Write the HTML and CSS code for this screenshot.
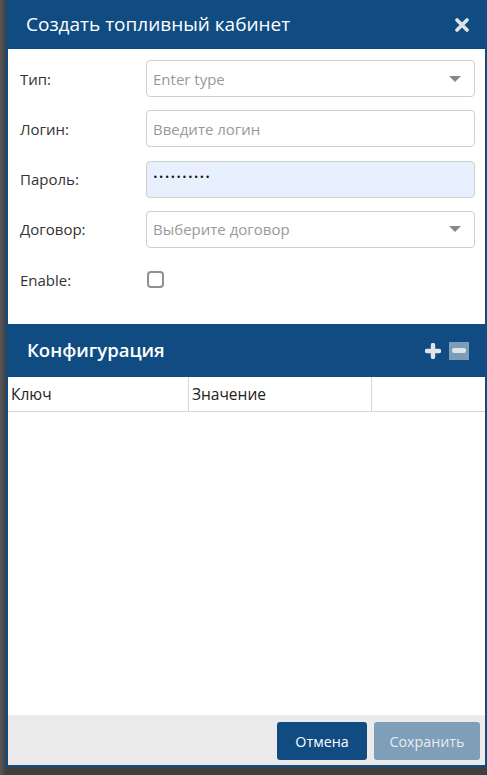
FILE: index.html
```html
<!DOCTYPE html>
<html lang="ru">
<head>
<meta charset="utf-8">
<title>Создать топливный кабинет</title>
<link rel="stylesheet" href="styles.css">
</head>
<body>
<div class="modal">
  <div class="modal-header">
    <span class="modal-title">Создать топливный кабинет</span>
    <svg class="close-icon" width="14" height="14" viewBox="0 0 14 14"><path d="M2 2 L12 12 M12 2 L2 12" stroke="#dfe3e8" stroke-width="3.6" stroke-linecap="round"/></svg>
  </div>
  <div class="form">
    <div class="row">
      <label class="label">Тип:</label>
      <div class="input select"><span class="placeholder">Enter type</span><span class="caret"></span></div>
    </div>
    <div class="row">
      <label class="label">Логин:</label>
      <div class="input"><span class="placeholder">Введите логин</span></div>
    </div>
    <div class="row">
      <label class="label">Пароль:</label>
      <div class="input autofill"><span class="dots">••••••••••</span></div>
    </div>
    <div class="row">
      <label class="label">Договор:</label>
      <div class="input select"><span class="placeholder">Выберите договор</span><span class="caret"></span></div>
    </div>
    <div class="row">
      <label class="label">Enable:</label>
      <span class="checkbox"></span>
    </div>
  </div>
  <div class="section-header">
    <span class="section-title">Конфигурация</span>
    <div class="section-tools">
      <svg class="plus-icon" width="16" height="16" viewBox="0 0 16 16"><path d="M8 2 V14 M2 8 H14" stroke="#dfe4ea" stroke-width="4.4" stroke-linecap="round"/></svg>
      <span class="minus-btn"><span class="minus-bar"></span></span>
    </div>
  </div>
  <div class="table-head">
    <div class="th">Ключ</div>
    <div class="th">Значение</div>
    <div class="th last"></div>
  </div>
  <div class="table-body"></div>
  <div class="footer">
    <button class="btn btn-primary">Отмена</button>
    <button class="btn btn-disabled">Сохранить</button>
  </div>
</div>
</body>
</html>
```
FILE: styles.css
```css
html, body {
  margin: 0;
  padding: 0;
}
body {
  width: 487px;
  height: 775px;
  overflow: hidden;
  background: linear-gradient(to right, #575757 0, #3f3f3f 6px, #3f3f3f 100%);
  font-family: "Open Sans", "Noto Sans", sans-serif;
  font-size: 15px;
  color: #333;
}
.modal {
  margin-left: 6px;
  width: 481px;
  height: 767px;
  box-sizing: border-box;
  border: 2px solid #104c82;
  border-top: 0;
  background: #fff;
  display: flex;
  flex-direction: column;
}
.modal-header {
  height: 49px;
  flex: none;
  background: #104c82;
  margin: 0 -2px;
  padding: 0 18px 0 20px;
  display: flex;
  align-items: center;
  justify-content: space-between;
}
.modal-title {
  color: #fff;
  font-size: 19px;
  margin-top: -2px;
}
.close-icon {
  display: block;
}
.form {
  padding: 11px 10px 26px 12px;
  flex: none;
}
.row {
  display: flex;
  align-items: center;
  height: 37px;
  margin-bottom: 13.33px;
}
.row:last-child {
  margin-bottom: 0;
}
.label {
  width: 126px;
  flex: none;
  color: #333;
}
.input {
  flex: 1;
  height: 37px;
  box-sizing: border-box;
  border: 1px solid #cfcfcf;
  border-radius: 4px;
  padding: 0 6px;
  display: flex;
  align-items: center;
  justify-content: space-between;
}
.placeholder {
  color: #999;
}
.autofill {
  background: #e8f0fe;
}
.dots {
  color: #111;
  font-family: "DejaVu Sans", sans-serif;
  font-size: 8px;
  letter-spacing: 1.1px;
  margin-top: -3px;
}
.caret {
  width: 0;
  height: 0;
  border-left: 6px solid transparent;
  border-right: 6px solid transparent;
  border-top: 6px solid #888;
  margin-right: 7px;
}
.checkbox {
  width: 17px;
  height: 17px;
  box-sizing: border-box;
  border: 2px solid #8f8f8f;
  border-radius: 4px;
  margin-left: 1px;
}
.section-header {
  height: 53px;
  flex: none;
  background: #104c82;
  margin: 0 -2px;
  padding: 0 18px 0 21px;
  display: flex;
  align-items: center;
  justify-content: space-between;
}
.section-title {
  color: #fff;
  font-size: 18.5px;
  font-weight: 600;
  margin-top: -2px;
}
.section-tools {
  display: flex;
  align-items: center;
  gap: 8px;
}
.plus-icon {
  display: block;
}
.minus-btn {
  width: 20px;
  height: 18px;
  background: #7d9cb8;
  display: flex;
  align-items: center;
  justify-content: center;
}
.minus-bar {
  width: 14px;
  height: 5px;
  border-radius: 2px;
  background: #dde4ea;
}
.table-head {
  height: 35px;
  flex: none;
  box-sizing: border-box;
  border-bottom: 1px solid #d6d6d6;
  display: grid;
  grid-template-columns: 181px 183px 1fr;
  font-size: 15.5px;
}
.th {
  border-right: 1px solid #d6d6d6;
  display: flex;
  align-items: center;
  padding-left: 3px;
  color: #222;
}
.th.last {
  border-right: 0;
}
.table-body {
  flex: 1;
}
.footer {
  height: 50px;
  flex: none;
  background: #ebebeb;
  display: flex;
  justify-content: flex-end;
  align-items: flex-start;
  padding: 7px 5px 0 0;
  box-sizing: border-box;
  gap: 7px;
}
.btn {
  height: 38px;
  border: 0;
  border-radius: 3px;
  font-family: "Open Sans", "Noto Sans", sans-serif;
  font-size: 14.3px;
  padding: 0;
}
.btn-primary {
  width: 90px;
  background: #104c82;
  color: #fff;
}
.btn-disabled {
  width: 106px;
  background: #7f9eb8;
  color: #e6ecf2;
}
```
